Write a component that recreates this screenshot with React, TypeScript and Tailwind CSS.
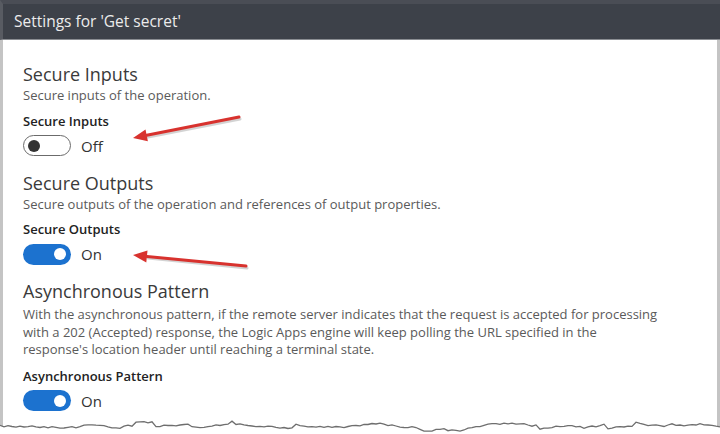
import React from "react";

const FONT = { fontFamily: '"Open Sans", "Noto Sans", sans-serif' };

function Toggle({ on }: { on: boolean }) {
  return (
    <div className="flex items-center h-[22px] mt-[5px]">
      {on ? (
        <div className="w-[48px] h-[21px] rounded-full bg-[#1c72cf] flex items-center justify-end pr-[5px]">
          <div className="w-[12px] h-[12px] rounded-full bg-white" />
        </div>
      ) : (
        <div className="w-[48px] h-[21px] rounded-full border-[1.5px] border-[#6b6b6b] bg-white flex items-center pl-[4px]">
          <div className="w-[12px] h-[12px] rounded-full bg-[#333333]" />
        </div>
      )}
      <span className="ml-[10px] text-[15px] leading-[22px] text-[#333]">{on ? "On" : "Off"}</span>
    </div>
  );
}

function Section({
  title,
  desc,
  label,
  on,
  first,
  multi,
}: {
  title: string;
  desc: React.ReactNode;
  label: string;
  on: boolean;
  first?: boolean;
  multi?: boolean;
}) {
  return (
    <div className={first ? "" : "mt-[14px]"}>
      <div className="text-[18px] leading-[24px] text-[#3a3a3a]">{title}</div>
      <div className={(multi ? "mt-[3px]" : "mt-[1px]") + " text-[13px] leading-[17.5px] text-[#5a5a5a]"}>{desc}</div>
      <div className={(multi ? "mt-[8px]" : "mt-[7px]") + " text-[13px] leading-[18px] font-semibold text-[#222]"}>{label}</div>
      <Toggle on={on} />
    </div>
  );
}

function makeEdge() {
  let s = 12345;
  const rand = () => {
    s = (s * 1103515245 + 12345) % 2147483648;
    return s / 2147483648;
  };
  const pts: [number, number][] = [];
  let y = 425;
  for (let x = 0; x <= 722; x += 4) {
    y += (rand() - 0.5) * 3.2;
    if (rand() > 0.93) y -= 3;
    if (rand() > 0.95) y += 4;
    y = Math.max(418, Math.min(432, y));
    y += (425 - y) * 0.12;
    pts.push([x, Math.round(y * 10) / 10]);
  }
  return pts;
}

export default function App() {
  const edge = makeEdge();
  const line = edge.map((p) => p.join(",")).join(" ");
  const poly = line + " 722,440 0,440";
  return (
    <div className="relative w-[720px] h-[434px] overflow-hidden bg-white" style={FONT}>
      <div className="flex flex-col h-[434px]">
        <div className="h-[40px] shrink-0 bg-[#3d4149] border-t-[4px] border-t-[#4a4d55] border-l-[3px] border-l-[#585b62] border-b border-b-[#8a8d92] flex items-center pl-[11px]">
          <span className="text-[15.5px] text-[#ececec] leading-[20px] -mt-[1px]">Settings for 'Get secret'</span>
        </div>
        <div className="flex-1 border-l-[3px] border-r-[3px] border-[#c4c4c4] pl-[20px] pt-[22px]">
          <Section
            first
            title="Secure Inputs"
            desc="Secure inputs of the operation."
            label="Secure Inputs"
            on={false}
          />
          <Section
            title="Secure Outputs"
            desc="Secure outputs of the operation and references of output properties."
            label="Secure Outputs"
            on={true}
          />
          <Section
            multi
            title="Asynchronous Pattern"
            desc={
              <>
                With the asynchronous pattern, if the remote server indicates that the request is accepted for processing
                <br />
                with a 202 (Accepted) response, the Logic Apps engine will keep polling the URL specified in the
                <br />
                response's location header until reaching a terminal state.
              </>
            }
            label="Asynchronous Pattern"
            on={true}
          />
        </div>
      </div>
      <svg className="absolute inset-0 pointer-events-none" width="720" height="434" viewBox="0 0 720 434">
        <polygon points={poly} fill="#ffffff" />
        <polyline points={line} fill="none" stroke="#6e6e6e" strokeWidth="1.3" />
        <g opacity="0.25">
          <line x1="240" y1="119" x2="148" y2="137" stroke="#555" strokeWidth="3" strokeLinecap="round" />
          <line x1="247" y1="268" x2="148" y2="258" stroke="#555" strokeWidth="3" strokeLinecap="round" />
        </g>
        <line x1="239" y1="117" x2="146.7" y2="135.3" stroke="#d8322e" strokeWidth="3" strokeLinecap="round" />
        <polygon points="133,138 145.5,129.4 147.9,141.2" fill="#d8322e" />
        <line x1="246" y1="266" x2="146.9" y2="256.4" stroke="#d8322e" strokeWidth="3" strokeLinecap="round" />
        <polygon points="133,255 147.5,250.4 146.3,262.4" fill="#d8322e" />
      </svg>
    </div>
  );
}
